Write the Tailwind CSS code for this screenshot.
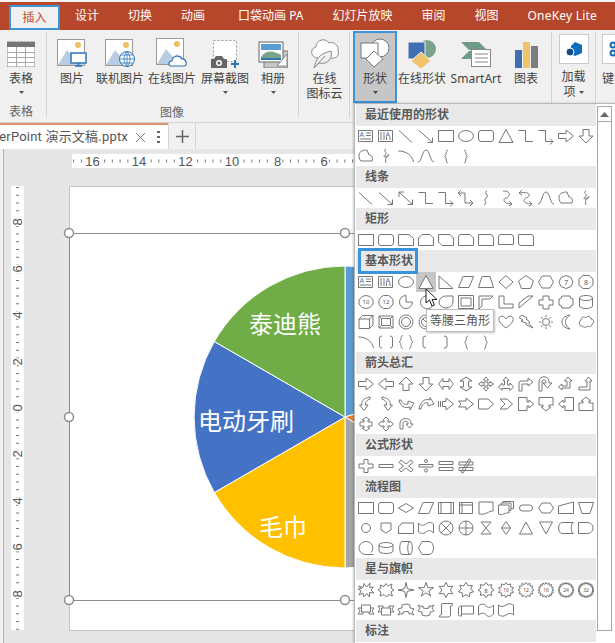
<!DOCTYPE html>
<html lang="zh">
<head>
<meta charset="utf-8">
<title>PowerPoint 插入形状</title>
<script src="https://cdn.jsdelivr.net/npm/@tailwindcss/browser@4"></script>
</head>
<body class="relative w-[615px] h-[643px] overflow-hidden flex flex-col bg-[#e6e6e6] text-xs text-[#444] font-['Noto_Sans','Noto_Sans_CJK_SC',sans-serif]">

<!-- shape library for the dropdown, every shape sits in a 20x20 cell -->
<svg class="absolute w-0 h-0">
  <defs>
    <g id="tb"><path d="M2.5 4.5H16.5V15.5H2.5Z M10 7H15 M10 9.5H15 M4 13H15"/><text x="3.5" y="11" class="text-[7px] fill-[#2e75b6] stroke-none">A</text></g>
    <g id="vt"><path d="M2.5 4.5H16.5V15.5H2.5Z M5 6V14 M8 6V14 M10.5 11V14 M14 11V14"/><text x="9.5" y="10.5" class="text-[7px] fill-[#2e75b6] stroke-none">A</text></g>
    <path id="line" d="M3 4.5L16 16.5"/>
    <path id="arrow" d="M3 4.5L16.5 16.5 M16.5 11.5V16.5H11.5"/>
    <path id="dbl" d="M3 4L16.5 16.5 M3 9V4H8 M16.5 11.5V16.5H11.5"/>
    <path id="rect" d="M2.5 4.5H17.5V15.5H2.5Z"/>
    <path id="ell" d="M2.5 10a7.5 5.5 0 1 0 15 0a7.5 5.5 0 1 0 -15 0Z"/>
    <path id="rr" d="M5 4.5H15a2.5 2.5 0 0 1 2.5 2.5V13a2.5 2.5 0 0 1-2.5 2.5H5a2.5 2.5 0 0 1-2.5-2.5V7A2.5 2.5 0 0 1 5 4.5Z"/>
    <path id="tri" d="M10 3.5L17 16.5H3Z"/>
    <path id="elb" d="M2.5 4.5H9.5V15.5H17"/>
    <path id="elba" d="M2.5 4.5H9.5V15.5H17 M14 12.5L17 15.5L14 18.5"/>
    <path id="elbd" d="M5 2L2 5L5 8 M2 5H9V15H17 M14 12L17 15L14 18"/>
    <path id="rarr" d="M2.5 7.5H10V4L17.5 10L10 16V12.5H2.5Z"/>
    <path id="larr" d="M17.5 7.5H10V4L2.5 10L10 16V12.5H17.5Z"/>
    <path id="uarr" d="M7 16.5H13V10H17L10 3L3 10H7Z"/>
    <path id="darr" d="M7 3.5H13V10H17L10 17L3 10H7Z"/>
    <path id="free" d="M3 9C3 5 8 4 11 4L13 9C16 9 17 12 16 15H5C3 13 3 11 3 9Z"/>
    <path id="scrib" d="M10 3C6 5 13 7 9 9C5 11 12 12 13 9C13 7 8 12 10 17"/>
    <path id="arc" d="M2.5 5C10 5 16 9 17.5 16"/>
    <path id="curve" d="M2 16C6 16 6 4 10 4C14 4 14 16 18 16"/>
    <path id="lbr" d="M12 4C9.5 4 11 9.5 8.5 10.5C11 11.5 9.5 17 12 17"/>
    <path id="rbr" d="M8 4C10.5 4 9 9.5 11.5 10.5C9 11.5 10.5 17 8 17"/>
    <path id="cc" d="M11 3C7 4 14 8 10 10C6 12 13 15 8 17"/>
    <path id="cca" d="M7 3C16 3 14 9 10 10C6 11 8 16 16 16 M13 13L16 16L13 18"/>
    <path id="ccd" d="M6 2L3 5L6 7 M3 5C14 3 16 8 10 10C6 12 8 16 16 16 M13 13L16 16L13 18"/>
    <path id="snip1" d="M2.5 4.5H13L17.5 8.5V15.5H2.5Z"/>
    <path id="snip2" d="M6 4.5H14L17.5 8V15.5H2.5V8Z"/>
    <path id="snipd" d="M2.5 4.5H14L17.5 8V15.5H6L2.5 12Z"/>
    <path id="snipr" d="M5 4.5H14L17.5 8V15.5H2.5V7Q2.5 4.5 5 4.5Z"/>
    <path id="rnd1" d="M2.5 4.5H14Q17.5 4.5 17.5 8V15.5H2.5Z"/>
    <path id="rnd2" d="M5 4.5H15Q17.5 4.5 17.5 7V14.5H2.5V7Q2.5 4.5 5 4.5Z"/>
    <path id="rndd" d="M2.5 4.5H15Q17.5 4.5 17.5 7V15.5H5Q2.5 15.5 2.5 13Z"/>
    <path id="rtri" d="M3 4L17 16.5H3Z"/>
    <path id="para" d="M7 4.5H17.5L13 15.5H2.5Z"/>
    <path id="trap" d="M6 4.5H14L17.5 15.5H2.5Z"/>
    <path id="diam" d="M10 3.5L17 10L10 16.5L3 10Z"/>
    <path id="pent" d="M10 3.5L17.5 9L14.5 16.5H5.5L2.5 9Z"/>
    <path id="hex" d="M6 4H14L17.5 10L14 16H6L2.5 10Z"/>
    <g id="n7"><path d="M10 3.5L15 5.5L17 10L15 14.5L10 16.5L5 14.5L3 10L5 5.5Z"/><text x="10" y="12.5" text-anchor="middle" class="text-[7px] fill-[#555] stroke-none">7</text></g>
    <g id="n8"><path d="M7 3.5H13L17 7V13L13 16.5H7L3 13V7Z"/><text x="10" y="12.5" text-anchor="middle" class="text-[7px] fill-[#555] stroke-none">8</text></g>
    <g id="n10"><path d="M10 3.5L14 4.5L17 8V12L14 15.5L10 16.5L6 15.5L3 12V8L6 4.5Z"/><text x="10" y="12" text-anchor="middle" class="text-[6px] fill-[#555] stroke-none">10</text></g>
    <g id="n12"><path d="M7.5 3.5H12.5L15 5L17 8V12L15 15L12.5 16.5H7.5L5 15L3 12V8L5 5Z"/><text x="10" y="12" text-anchor="middle" class="text-[6px] fill-[#555] stroke-none">12</text></g>
    <path id="pie" d="M10 3.5a6.5 6.5 0 1 0 6.5 6.5H10Z"/>
    <path id="chord" d="M14 4.5a6.5 6.5 0 1 0 2 10Z"/>
    <path id="tear" d="M3 10a7 6 0 0 1 7-6H17V10a7 6 0 0 1-14 0Z"/>
    <path id="frame" d="M2.5 3.5H17.5V16.5H2.5Z M5 6H15V14H5Z"/>
    <path id="half" d="M3 4H17L14 7H6V14L3 17Z"/>
    <path id="ell2" d="M3 4H8V12H17V16H3Z"/>
    <path id="diag" d="M3 16V11L12 4H17Z"/>
    <path id="cross" d="M7 4H13V8H17V13H13V17H7V13H3V8H7Z"/>
    <path id="plaq" d="M6 4H14Q14 7 17 7V13Q14 13 14 16H6Q6 13 3 13V7Q6 7 6 4Z"/>
    <path id="can" d="M3.5 6a6.5 2.5 0 0 1 13 0V14a6.5 2.5 0 0 1-13 0Z M3.5 6a6.5 2.5 0 0 0 13 0"/>
    <path id="cube" d="M3 7L6.5 3.5H17V13L13.5 16.5H3Z M3 7H13.5V16.5 M13.5 7L17 3.5"/>
    <path id="bevel" d="M3 4H17V16H3Z M5.5 6.5H14.5V13.5H5.5Z M3 4L5.5 6.5 M17 4L14.5 6.5 M17 16L14.5 13.5 M3 16L5.5 13.5"/>
    <path id="donut" d="M3 10a7 7 0 1 0 14 0a7 7 0 1 0-14 0Z M5.5 10a4.5 4.5 0 1 0 9 0a4.5 4.5 0 1 0-9 0Z"/>
    <path id="nosym" d="M3 10a7 7 0 1 0 14 0a7 7 0 1 0-14 0Z M5.5 10a4.5 4.5 0 1 0 9 0a4.5 4.5 0 1 0-9 0Z M6.5 6.5L13.5 13.5"/>
    <path id="heart" d="M10 16C3 11 2.5 8 3 6C4 3.5 8 3.5 10 7C12 3.5 16 3.5 17 6C17.5 8 17 11 10 16Z"/>
    <path id="bolt" d="M6 3L11 6L10 7L14 10L12.5 11L17 16L10 12.5L11 11.5L5 9L7 8L3 5.5Z"/>
    <path id="sun" d="M6.5 10a3.5 3.5 0 1 0 7 0a3.5 3.5 0 1 0-7 0Z M10 3V5 M10 15V17 M3 10H5 M15 10H17 M5 5L6.5 6.5 M15 5L13.5 6.5 M5 15L6.5 13.5 M15 15L13.5 13.5"/>
    <path id="moon" d="M14 3C8 4 6 7 6 10C6 13 8 16 14 17C10 14 9.5 12 9.5 10C9.5 8 10 6 14 3Z"/>
    <path id="cloud" d="M5 8C5 5 8 4 10 6C11 3.5 15 4 15 7C18 7 18.5 11 16 12C16 15 13 15 12 14C10 16 7 15.5 6.5 14C3 14.5 2 10 5 8Z"/>
    <path id="brkp" d="M6 4Q3.5 4 3.5 6V14Q3.5 16 6 16 M14 4Q16.5 4 16.5 6V14Q16.5 16 14 16"/>
    <path id="brcp" d="M7 3.5C4 3.5 6 9 3 10C6 11 4 16.5 7 16.5 M13 3.5C16 3.5 14 9 17 10C14 11 16 16.5 13 16.5"/>
    <path id="lbk" d="M10 4Q7 4 7 6V14Q7 16 10 16"/>
    <path id="rbk" d="M8 4Q11 4 11 6V14Q11 16 8 16"/>
    <path id="lr" d="M2.5 10L7 4.5V7.5H13V4.5L17.5 10L13 15.5V12.5H7V15.5Z"/>
    <path id="ud" d="M10 3L16 7H12.5V13H16L10 17L4 13H7.5V7H4Z"/>
    <path id="quad" d="M10 3L12.5 6H11V9H14V7.5L17.5 10L14 12.5V11H11V14H12.5L10 17L7.5 14H9V11H6V12.5L2.5 10L6 7.5V9H9V6H7.5Z"/>
    <path id="lru" d="M10 3L13 6.5H11.5V11H14V9L17.5 13L14 16.5V14.5H6V16.5L2.5 13L6 9V11H8.5V6.5H7Z"/>
    <path id="bent" d="M3 17V9Q3 7 5 7H12V4L17 8L12 12V10H6V17Z"/>
    <path id="uturn" d="M3 17V8C3 1 13 1 13 8V9H16L11.5 14L7 9H10V8C10 5 6 5 6 8V17Z"/>
    <path id="lup" d="M12 3L16 7H14V14H6V16L2.5 13L6 10V12H11V7H8.5Z"/>
    <path id="bup" d="M3 13H11V7H9L12.5 3L16 7H14V16H3Z"/>
    <path id="cl" d="M14 3C7 4 5 8 6 11H3.5L8 16.5L12 11H9.5C9 8 11 6 14 5Z"/>
    <path id="cr" d="M6 3C13 4 15 8 14 11H16.5L12 16.5L8 11H10.5C11 8 9 6 6 5Z"/>
    <path id="cu" d="M3 6C4 12 9 15 14 13V16L18 9L12 7V10C9 11 6 10 5 6Z"/>
    <path id="cd" d="M3 15C4 8 9 4 14 6V3.5L18 10L12 12V9C9 8 6 10 5 15Z"/>
    <path id="str" d="M2.5 7V13 M4.5 7V13 M6.5 7.5H10V4L17.5 10L10 16V12.5H6.5Z"/>
    <path id="notch" d="M2.5 7H10V4L17.5 10L10 16V13H2.5L5 10Z"/>
    <path id="home" d="M2.5 5H12L17.5 10L12 15H2.5Z"/>
    <path id="chev" d="M4 5H11L16.5 10L11 15H4L9 10Z"/>
    <path id="calr" d="M2.5 3.5H11V8H13V6L17.5 10L13 14V12H11V16.5H2.5Z"/>
    <path id="cald" d="M3 3.5H17V11H13V13H15L10 17L5 13H7V11H3Z"/>
    <path id="call" d="M17.5 3.5H9V8H7V6L2.5 10L7 14V12H9V16.5H17.5Z"/>
    <path id="calu" d="M3 16.5H17V9H13V7H15L10 3L5 7H7V9H3Z"/>
    <path id="calv" d="M10 3L14 6H12V8H16V12H12V14H14L10 17L6 14H8V12H4V8H8V6H6Z"/>
    <path id="calq" d="M10 3L13 6H12V8H14V7L17.5 10L14 13V12H12V14H13L10 17L7 14H8V12H6V13L2.5 10L6 7V8H8V6H7Z"/>
    <path id="circ" d="M4 15V9C4 3 15 3 15 9V10H17L13.5 14L10 10H12V9C12 6.5 7 6.5 7 9V15Z"/>
    <path id="plus" d="M8 3.5H12V8H17V12H12V16.5H8V12H3V8H8Z"/>
    <path id="minus" d="M3 8.5H17V11.5H3Z"/>
    <path id="mult" d="M5 4L10 8L15 4L17 6.5L12.5 10L17 13.5L15 16L10 12L5 16L3 13.5L7.5 10L3 6.5Z"/>
    <path id="divd" d="M3 8.5H17V11H3Z M8.5 5a1.5 1.5 0 1 0 3 0a1.5 1.5 0 1 0-3 0Z M8.5 14.5a1.5 1.5 0 1 0 3 0a1.5 1.5 0 1 0-3 0Z"/>
    <path id="eq" d="M3 5.5H17V8.5H3Z M3 11.5H17V14.5H3Z"/>
    <path id="neq" d="M3 6H17V9H3Z M3 11.5H17V14.5H3Z M13 3L15 4L7 17L5 16Z"/>
    <path id="dec" d="M2.5 10L10 5.5L17.5 10L10 14.5Z"/>
    <path id="pred" d="M2.5 4.5H17.5V15.5H2.5Z M5 4.5V15.5 M15 4.5V15.5"/>
    <path id="intn" d="M3.5 4.5H16.5V15.5H3.5Z M6 4.5V15.5 M3.5 7H16.5"/>
    <path id="doc" d="M3 4H17V13C12 13 11 17 3 16Z"/>
    <path id="multi" d="M2.5 7H13V15C9 14 7 18 2.5 16Z M5 7V5H15V12.5H13 M7 5V3.5H17.5V10.5H15"/>
    <path id="term" d="M6.5 7H13.5a3 3 0 0 1 0 6H6.5a3 3 0 0 1 0-6Z"/>
    <path id="prep" d="M6 5H14L17.5 10L14 15H6L2.5 10Z"/>
    <path id="mani" d="M2.5 8L17.5 4V15.5H2.5Z"/>
    <path id="mano" d="M2.5 4.5H17.5L14 15.5H6Z"/>
    <path id="conn" d="M5.5 10a4.5 4.5 0 1 0 9 0a4.5 4.5 0 1 0-9 0Z"/>
    <path id="off" d="M5 5H15V12L10 15L5 12Z"/>
    <path id="card" d="M6 5H17.5V15.5H2.5V9Z"/>
    <path id="tape" d="M2.5 5C5 8 8 8 10 6C12 4 15 4 17.5 6V15C15 12 12 12 10 14C8 16 5 16 2.5 14Z"/>
    <path id="sumj" d="M3 10a7 7 0 1 0 14 0a7 7 0 1 0-14 0Z M5 5L15 15 M15 5L5 15"/>
    <path id="orj" d="M3 10a7 7 0 1 0 14 0a7 7 0 1 0-14 0Z M10 3V17 M3 10H17"/>
    <path id="coll" d="M5 4H15L5 16H15Z"/>
    <path id="sort" d="M10 3.5L14.5 10L10 16.5L5.5 10Z M5.5 10H14.5"/>
    <path id="ext" d="M10 4L16.5 16H3.5Z"/>
    <path id="merg" d="M3.5 4H16.5L10 16Z"/>
    <path id="stor" d="M6 4.5H17.5C14.5 4.5 14.5 15.5 17.5 15.5H6C1.5 15.5 1.5 4.5 6 4.5Z"/>
    <path id="delay" d="M2.5 4.5H11C19 4.5 19 15.5 11 15.5H2.5Z"/>
    <path id="seq" d="M17.5 16.5H10a7 6.5 0 1 1 5-2"/>
    <path id="disk" d="M3 7a7 2.5 0 0 1 14 0V13a7 2.5 0 0 1-14 0Z M3 7a7 2.5 0 0 0 14 0"/>
    <path id="drum" d="M6 3.5H14C17 3.5 17 16.5 14 16.5H6C3 16.5 3 3.5 6 3.5Z M14 3.5C11 3.5 11 16.5 14 16.5"/>
    <path id="disp" d="M6 3.5H13C19 3.5 19 16.5 13 16.5H6L2.5 10Z"/>
    <path id="exp1" d="M2.5 6L7 7.5L8 3.5L10.5 7L14 3L13.5 7.5L17.5 7L15 10L18 13L13.5 12.5L13.5 17L10.5 13.5L8 17L7 13L3 15L5 11L2 9L5.5 8.5Z"/>
    <path id="exp2" d="M4 5L8 6.5L10 3.5L12 6L16 4L15 8L18 10L15 12L16.5 16L12.5 14.5L10.5 17L8 14.5L4 16L5 12L2 10L5 8Z"/>
    <path id="s4" data-star="4" data-r="2"/>
    <path id="s5" data-star="5" data-r="3"/>
    <path id="s6" data-star="6" data-r="4.2"/>
    <path id="s7" data-star="7" data-r="4.8"/>
    <g id="s8"><path data-star="8" data-r="5.4"/><text x="10" y="12.5" text-anchor="middle" class="text-[6px] fill-[#555] stroke-none">8</text></g>
    <g id="s10"><path data-star="10" data-r="5.6"/><text x="10" y="12" text-anchor="middle" class="text-[5px] fill-[#555] stroke-none">10</text></g>
    <g id="s12"><path data-star="12" data-r="6"/><text x="10" y="12" text-anchor="middle" class="text-[5px] fill-[#555] stroke-none">12</text></g>
    <g id="s16"><path data-star="16" data-r="6"/><text x="10" y="12" text-anchor="middle" class="text-[5px] fill-[#555] stroke-none">16</text></g>
    <g id="s24"><path data-star="24" data-r="6.2"/><text x="10" y="12" text-anchor="middle" class="text-[5px] fill-[#555] stroke-none">24</text></g>
    <g id="s32"><path data-star="32" data-r="6.2"/><text x="10" y="12" text-anchor="middle" class="text-[5px] fill-[#555] stroke-none">32</text></g>
    <path id="rup" d="M2 8H5.5V5H14.5V8H18L16 11L18 14H13V12H7V14H2L4 11Z M5.5 8V12H7 M14.5 8V12H13"/>
    <path id="rdn" d="M2 6H7V8H13V6H18L16 9L18 12H14.5V15H5.5V12H2L4 9Z M5.5 12V8H7 M14.5 12V8H13"/>
    <path id="rcu" d="M2 9Q4 8 6 8V5Q10 3 14 5V8Q16 8 18 9L16 12L18 15Q15 13 13 14V12Q10 11 7 12V14Q5 13 2 15L4 12Z"/>
    <path id="rcd" d="M2 5Q5 7 7 6V8Q10 9 13 8V6Q15 7 18 5L16 8L18 11Q16 12 14 12V15Q10 17 6 15V12Q4 12 2 11L4 8Z"/>
    <path id="vsc" d="M6 3.5H16.5Q17 6 14.5 6V15Q14 17 12 17H3.5Q3 15 5.5 14.5V6Q5 4 6 3.5Z"/>
    <path id="hsc" d="M5.5 6H17.5V14H5.5V16Q3 16.5 2.5 15V8Q3 6 5.5 6Z M5.5 6V14"/>
    <path id="wave" d="M2.5 6C6 3 9 4 10 6C12 8 15 8 17.5 5V14C15 17 12 17 10 15C9 13 6 12 2.5 15Z"/>
    <path id="dwav" d="M2.5 5C5 7 7 7 10 5C13 3 15 4 17.5 5V15C15 13 13 13 10 15C7 17 5 16 2.5 15Z"/>
  </defs>
</svg>

<!-- title bar -->
<div class="h-[2px] bg-[#f4f4f4]"></div>
<div class="h-[28px] bg-[#b7472a] flex items-center gap-[29px] pl-[9px] text-white">
  <div class="w-[51px] h-[25px] -mr-[14px] self-end flex items-center justify-center bg-[#f0f0f0] border-2 border-[#3b93d9] text-[#c0502e]">插入</div>
  <span>设计</span>
  <span>切换</span>
  <span>动画</span>
  <span class="ml-[4px]">口袋动画 PA</span>
  <span>幻灯片放映</span>
  <span>审阅</span>
  <span>视图</span>
  <span class="whitespace-nowrap tracking-[0.2px]">OneKey Lite</span>
</div>

<!-- ribbon -->
<div class="h-[93px] bg-[#f0f0f0] border-b border-[#d4d4d4] flex leading-[15px]">
  <div class="w-[47px] pr-[5px] flex flex-col items-center relative">
    <div class="absolute right-0 top-[2px] bottom-[5px] w-px bg-[#d4d4d4]"></div>
    <div class="h-[41px] flex items-end pb-[4px]">
      <svg width="28" height="26" viewBox="0 0 28 26"><rect width="28" height="25" y="1" fill="#fff" stroke="#8a8a8a"/><rect width="28" height="5" y="1" fill="#757575"/><path d="M0 11.5H28M0 16.5H28M0 21.5H28M9.5 6V26M18.5 6V26" stroke="#a8a8a8"/></svg>
    </div>
    <span>表格</span>
    <svg class="mt-[5px]" width="5" height="3"><path d="M0 0H5L2.5 3Z" fill="#555"/></svg>
    <span class="mt-auto mb-[3px] text-[#666]">表格</span>
  </div>
  <div class="w-[252px] relative">
    <div class="absolute right-0 top-[2px] bottom-[5px] w-px bg-[#d4d4d4]"></div>
    <div class="flex h-[72px]">
      <div class="w-[48px] ml-px flex flex-col items-center">
        <div class="h-[41px] flex items-end pb-[4px]">
          <svg width="30" height="28" viewBox="0 0 30 28"><rect x=".5" y=".5" width="27" height="26" fill="#fff" stroke="#999"/><circle cx="21" cy="6" r="3" fill="#f0bd62"/><path d="M1 26L10 11L17 19L21 16L27 26Z" fill="#b8cde4"/><rect x="14" y="14" width="15" height="10" fill="#fff" stroke="#2e75b6" stroke-width="1.5"/><path d="M18 27H25M21.5 24V27" stroke="#2e75b6" stroke-width="1.5"/></svg>
        </div>
        <span>图片</span>
      </div>
      <div class="w-[48px] flex flex-col items-center">
        <div class="h-[41px] flex items-end pb-[4px]">
          <svg width="30" height="28" viewBox="0 0 30 28"><rect x=".5" y=".5" width="27" height="26" fill="#fff" stroke="#999"/><circle cx="21" cy="6" r="3" fill="#f0bd62"/><path d="M1 26L10 11L17 19L21 16L27 26Z" fill="#b8cde4"/><circle cx="22" cy="20" r="7.5" fill="#fff" stroke="#2e75b6"/><path d="M14.5 20H29.5M22 12.5V27.5M16 16H28M16 24H28M22 12.5C18 16 18 24 22 27.5C26 24 26 16 22 12.5" fill="none" stroke="#2e75b6" stroke-width=".8"/></svg>
        </div>
        <span class="whitespace-nowrap">联机图片</span>
      </div>
      <div class="w-[48px] ml-[4px] flex flex-col items-center">
        <div class="h-[41px] flex items-end pb-[4px]">
          <svg width="32" height="29" viewBox="0 0 32 29"><rect x=".5" y=".5" width="27" height="26" fill="#fff" stroke="#999"/><circle cx="21" cy="6" r="3" fill="#f0bd62"/><path d="M1 26L10 11L17 19L21 16L27 26Z" fill="#b8cde4"/><path d="M15 28C12 28 12 23 16 23C16 18 24 16 26 21C30 20 32 28 28 28Z" fill="#fff" stroke="#2e75b6" stroke-width="1.2"/></svg>
        </div>
        <span class="whitespace-nowrap">在线图片</span>
      </div>
      <div class="w-[48px] ml-[5px] flex flex-col items-center">
        <div class="h-[41px] flex items-end pb-[2px]">
          <svg width="30" height="29" viewBox="0 0 30 29"><rect x="3.5" y=".5" width="23" height="21" fill="#fff" stroke="#999" stroke-dasharray="2 2"/><path d="M1 19H4L6 16H12L14 19H17V28H1Z" fill="#666"/><circle cx="9" cy="23" r="3" fill="#fff"/><circle cx="9" cy="23" r="1.6" fill="#666"/><path d="M25 20V28M21 24H29" stroke="#2e75b6" stroke-width="2"/></svg>
        </div>
        <span class="whitespace-nowrap">屏幕截图</span>
        <svg class="mt-[5px]" width="5" height="3"><path d="M0 0H5L2.5 3Z" fill="#555"/></svg>
      </div>
      <div class="w-[48px] flex flex-col items-center">
        <div class="h-[41px] flex items-end pb-[3px]">
          <svg width="30" height="27" viewBox="0 0 30 27"><rect x="6" y="10" width="24" height="17" fill="#c8c8c8" stroke="#777"/><rect x="1" y="1" width="24" height="20" fill="#fff" stroke="#666"/><rect x="3" y="3" width="20" height="6" fill="#5b9bd5"/><path d="M3 16C8 9 14 9 23 14V19H3Z" fill="#7aa38c"/><path d="M3 18H23" stroke="#2e75b6" stroke-width="2"/><path d="M19 25L29 13V25Z" fill="#fff" stroke="#888"/></svg>
        </div>
        <span>相册</span>
        <svg class="mt-[5px]" width="5" height="3"><path d="M0 0H5L2.5 3Z" fill="#555"/></svg>
      </div>
    </div>
    <div class="text-center pr-[2px] pt-[3px] text-[#666]">图像</div>
  </div>
  <div class="w-[51px] flex flex-col items-center relative">
    <div class="absolute right-0 top-[2px] bottom-[5px] w-px bg-[#d4d4d4]"></div>
    <div class="h-[41px] flex items-end pb-[2px]">
      <svg width="30" height="31" viewBox="0 0 30 31" fill="#fff" stroke="#8a8a8a"><path d="M8 20C1 20 -1 11 6 9C6 2 15 -1 19 5C24 3 29 8 28 13C30 19 24 21 21 20"/><path d="M4 30C6 22 8 16 21 13C23 21 17 27 9 25Z" fill="#f0f0f0"/><path d="M4 30L15 18" /></svg>
    </div>
    <span class="text-center">在线<br>图标云</span>
  </div>
  <div class="flex h-[72px] pl-[3px]">
    <div class="w-[44px] h-[72px] mt-px bg-[#c6c6c6] border-2 border-[#3b93d9] flex flex-col items-center">
      <div class="h-[38px] flex items-end pb-[3px]">
        <svg width="30" height="30" viewBox="0 0 30 30" fill="#fff" stroke="#777"><circle cx="20" cy="10" r="9"/><rect x="1" y="5" width="17" height="15"/><path d="M14 13L23 21L14 29L6 21Z"/></svg>
      </div>
      <span>形状</span>
      <svg class="mt-[5px]" width="5" height="3"><path d="M0 0H5L2.5 3Z" fill="#444"/></svg>
    </div>
    <div class="w-[48px] ml-px flex flex-col items-center">
      <div class="h-[41px] flex items-end pb-[2px]">
        <svg width="30" height="30" viewBox="0 0 30 30"><circle cx="20" cy="10" r="9" fill="#7aa38c"/><path d="M1 3H18V20H1Z" fill="#3f6fb0" stroke="#f0f0f0"/><path d="M14 13L24 22L14 30L4 22Z" fill="#efc46c" stroke="#f0f0f0"/></svg>
      </div>
      <span class="whitespace-nowrap">在线形状</span>
    </div>
    <div class="w-[50px] ml-[5px] flex flex-col items-center">
      <div class="h-[41px] flex items-end pb-[4px]">
        <svg width="30" height="25" viewBox="0 0 30 25"><path d="M0 0H18L26 8H8Z" fill="#6f9c84"/><path d="M0 17L8 9H14V17Z" fill="#6f9c84"/><rect x="10.5" y="7.5" width="19" height="17" fill="#fff" stroke="#888"/><path d="M14 12H27M14 16H27M14 20H27" stroke="#888"/></svg>
      </div>
      <span>SmartArt</span>
    </div>
    <div class="w-[48px] ml-px flex flex-col items-center">
      <div class="h-[41px] flex items-end pb-[3px]">
        <svg width="23" height="27" viewBox="0 0 23 27"><rect y="9" width="7" height="18" fill="#3f6fb0"/><rect x="8" y="1" width="7" height="26" fill="#efc46c"/><rect x="16" y="5" width="7" height="22" fill="#7d7d7d"/></svg>
      </div>
      <span>图表</span>
    </div>
  </div>
  <div class="w-[45px] ml-px border-l border-r border-[#d4d4d4] h-[87px] mt-[2px] flex flex-col items-center">
    <div class="h-[36px] pt-[2px]">
      <div class="w-[30px] h-[30px] bg-white border border-[#ccc] flex items-center justify-center">
        <svg width="16" height="15" viewBox="0 0 16 15"><path d="M9 0L16 3V11L9 14L5 12V4Z" fill="#0f6cbd"/><circle cx="4" cy="10" r="4" fill="#0f4f8f" stroke="#fff"/></svg>
      </div>
    </div>
    <span class="mt-[1px] text-center">加载<br>项<svg class="inline ml-[3px]" width="5" height="3"><path d="M0 0H5L2.5 3Z" fill="#555"/></svg></span>
  </div>
  <div class="flex-1 overflow-hidden pl-[6px] flex flex-col">
    <div class="h-[41px] pt-[4px]">
      <div class="w-[30px] h-[30px] bg-white border border-[#ccc] flex items-center pl-[5px]">
        <svg class="shrink-0" width="18" height="16" viewBox="0 0 18 16" fill="none" stroke="#0f6cbd" stroke-width="2"><circle cx="5" cy="4" r="2.5"/><circle cx="5" cy="12" r="2.5"/></svg>
      </div>
    </div>
    <span>键</span>
  </div>
</div>

<!-- document tab strip -->
<div class="h-[26px] bg-[#f0f0f0] flex">
  <div class="w-[168px] bg-white border-t-2 border-[#e0916f] flex items-center justify-end text-[#555] text-[13px] overflow-hidden pr-[4px] gap-[5px] whitespace-nowrap font-['Roboto','Noto_Sans_CJK_SC',sans-serif]">
    <span class="tracking-[0.2px]">PowerPoint 演示文稿.pptx</span>
    <svg class="shrink-0 ml-[2px]" width="11" height="11" stroke="#777"><path d="M1 1L10 10M10 1L1 10"/></svg>
    <svg class="shrink-0 ml-[6px] mr-[4px]" width="3" height="12" fill="#666"><path d="M0 0h3v2h-3zM0 5h3v2h-3zM0 10h3v2h-3z"/></svg>
  </div>
  <div class="w-[28px] border-l border-r border-[#d4d4d4] flex items-center justify-center">
    <svg width="13" height="13" stroke="#666" stroke-width="1.5"><path d="M6.5 0V13M0 6.5H13"/></svg>
  </div>
</div>

<!-- editing canvas, coordinates are page pixels -->
<svg class="flex-1 block w-[615px]" viewBox="0 149 615 494">
  <path d="M3.5 149V643" stroke="#b4b4b4"/>
  <rect x="0" y="149" width="3" height="494" fill="#f0f0f0"/>

  <rect x="72" y="154" width="283" height="14" fill="#fff"/>
  <path d="M73.1 161H355" stroke="#777" stroke-width="3" stroke-dasharray="1 6.75"/>
  <g class="text-[13px] fill-[#555]" text-anchor="middle" font-family="Liberation Sans" stroke="#fff" stroke-width="3" paint-order="stroke">
    <text x="92.5" y="165.5">16</text>
    <text x="139" y="165.5">14</text>
    <text x="185.5" y="165.5">12</text>
    <text x="232" y="165.5">10</text>
    <text x="277.5" y="165.5">8</text>
    <text x="324" y="165.5">6</text>
  </g>

  <rect x="11" y="186" width="13" height="444" fill="#fff"/>
  <path d="M17.5 187.1V630" stroke="#777" stroke-width="3" stroke-dasharray="1 6.75"/>
  <g class="text-[13px] fill-[#555]" text-anchor="middle" font-family="Liberation Sans" stroke="#fff" stroke-width="3" paint-order="stroke">
    <text transform="translate(22 222) rotate(-90)">8</text>
    <text transform="translate(22 269) rotate(-90)">6</text>
    <text transform="translate(22 315) rotate(-90)">4</text>
    <text transform="translate(22 362) rotate(-90)">2</text>
    <text transform="translate(22 408) rotate(-90)">0</text>
    <text transform="translate(22 454) rotate(-90)">2</text>
    <text transform="translate(22 501) rotate(-90)">4</text>
    <text transform="translate(22 547) rotate(-90)">6</text>
    <text transform="translate(22 594) rotate(-90)">8</text>
  </g>

  <rect x="69.5" y="186.5" width="300" height="444" fill="#fff" stroke="#c4c4c4"/>

  <g stroke="#fff">
    <path d="M345 417V266A151 151 0 0 1 489.6 373.6Z" fill="#5b9bd5"/>
    <path d="M345 417L489.6 373.6A151 151 0 0 1 474.5 494.7Z" fill="#ed7d31"/>
    <path d="M345 417L474.5 494.7A151 151 0 0 1 345 568Z" fill="#a5a5a5"/>
    <path d="M345 417V568A151 151 0 0 1 214.3 492.5Z" fill="#ffc000"/>
    <path d="M345 417L214.3 492.5A151 151 0 0 1 214.3 341.5Z" fill="#4472c4"/>
    <path d="M345 417L214.3 341.5A151 151 0 0 1 345 266Z" fill="#70ad47"/>
  </g>
  <g class="text-[24px] fill-white" text-anchor="middle" font-family="Noto Sans CJK SC">
    <text x="285" y="333">泰迪熊</text>
    <text x="246" y="430">电动牙刷</text>
    <text x="283" y="536">毛巾</text>
  </g>

  <path d="M69.5 233.5H355 M69.5 600.5H355 M69.5 233.5V600.5" fill="none" stroke="#8c8c8c"/>
  <g fill="#fff" stroke="#8c8c8c" stroke-width="1.5">
    <circle cx="69" cy="233" r="4.5"/>
    <circle cx="345" cy="233" r="4.5"/>
    <circle cx="69" cy="417" r="4.5"/>
    <circle cx="69" cy="600" r="4.5"/>
    <circle cx="345" cy="600" r="4.5"/>
  </g>
</svg>

<!-- shapes dropdown -->
<div class="absolute left-[354px] top-[103px] bottom-0 right-0 bg-white border-l border-t border-[#b8b8b8] shadow-[-1px_0_2px_rgba(0,0,0,0.2)] flex">
  <div class="w-[241px] pl-px">
    <div class="h-[22px] bg-[#e9e9e9] pl-[9px] leading-[22px] font-bold text-[#5a5a5a]">最近使用的形状</div>
    <svg class="block w-[240px] h-[20px] fill-none stroke-[#777]"><use href="#tb"/><use href="#vt" x="20"/><use href="#line" x="40"/><use href="#arrow" x="60"/><use href="#rect" x="80"/><use href="#ell" x="100"/><use href="#rr" x="120"/><use href="#tri" x="140"/><use href="#elb" x="160"/><use href="#elba" x="180"/><use href="#rarr" x="200"/><use href="#darr" x="220"/></svg>
    <svg class="block w-[240px] h-[20px] fill-none stroke-[#777]"><use href="#free"/><use href="#scrib" x="20"/><use href="#arc" x="40"/><use href="#curve" x="60"/><use href="#lbr" x="80"/><use href="#rbr" x="100"/></svg>

    <div class="h-[22px] bg-[#e9e9e9] pl-[9px] leading-[22px] font-bold text-[#5a5a5a]">线条</div>
    <svg class="block w-[240px] h-[20px] fill-none stroke-[#777]"><use href="#line"/><use href="#arrow" x="20"/><use href="#dbl" x="40"/><use href="#elb" x="60"/><use href="#elba" x="80"/><use href="#elbd" x="100"/><use href="#cc" x="120"/><use href="#cca" x="140"/><use href="#ccd" x="160"/><use href="#curve" x="180"/><use href="#free" x="200"/><use href="#scrib" x="220"/></svg>

    <div class="h-[22px] bg-[#e9e9e9] pl-[9px] leading-[22px] font-bold text-[#5a5a5a]">矩形</div>
    <svg class="block w-[240px] h-[20px] fill-none stroke-[#777]"><use href="#rect"/><use href="#rr" x="20"/><use href="#snip1" x="40"/><use href="#snip2" x="60"/><use href="#snipd" x="80"/><use href="#snipr" x="100"/><use href="#rnd1" x="120"/><use href="#rnd2" x="140"/><use href="#rndd" x="160"/></svg>

    <div class="relative h-[22px] bg-[#e9e9e9] pl-[9px] leading-[22px] font-bold text-[#5a5a5a]">基本形状
      <div class="absolute left-[2px] -top-[2px] w-[60px] h-[26px] border-[3px] border-[#3b93d9]"></div>
    </div>
    <svg class="block w-[240px] h-[20px] fill-none stroke-[#777]"><rect x="60" width="20" height="20" class="fill-[#c6c6c6] stroke-none"/><use href="#tb"/><use href="#vt" x="20"/><use href="#ell" x="40"/><use href="#tri" x="60" class="fill-white"/><use href="#rtri" x="80"/><use href="#para" x="100"/><use href="#trap" x="120"/><use href="#diam" x="140"/><use href="#pent" x="160"/><use href="#hex" x="180"/><use href="#n7" x="200"/><use href="#n8" x="220"/></svg>
    <svg class="block w-[240px] h-[20px] fill-none stroke-[#777]"><use href="#n10"/><use href="#n12" x="20"/><use href="#pie" x="40"/><use href="#chord" x="60"/><use href="#tear" x="80"/><use href="#frame" x="100"/><use href="#half" x="120"/><use href="#ell2" x="140"/><use href="#diag" x="160"/><use href="#cross" x="180"/><use href="#plaq" x="200"/><use href="#can" x="220"/></svg>
    <svg class="block w-[240px] h-[20px] fill-none stroke-[#777]"><use href="#cube"/><use href="#bevel" x="20"/><use href="#donut" x="40"/><use href="#nosym" x="60"/><use href="#heart" x="140"/><use href="#bolt" x="160"/><use href="#sun" x="180"/><use href="#moon" x="200"/><use href="#cloud" x="220"/></svg>
    <svg class="block w-[240px] h-[20px] fill-none stroke-[#777]"><use href="#arc"/><use href="#brkp" x="20"/><use href="#brcp" x="40"/><use href="#lbk" x="60"/><use href="#rbk" x="80"/><use href="#lbr" x="100"/><use href="#rbr" x="120"/></svg>

    <div class="h-[22px] bg-[#e9e9e9] pl-[9px] leading-[22px] font-bold text-[#5a5a5a]">箭头总汇</div>
    <svg class="block w-[240px] h-[20px] fill-none stroke-[#777]"><use href="#rarr"/><use href="#larr" x="20"/><use href="#uarr" x="40"/><use href="#darr" x="60"/><use href="#lr" x="80"/><use href="#ud" x="100"/><use href="#quad" x="120"/><use href="#lru" x="140"/><use href="#bent" x="160"/><use href="#uturn" x="180"/><use href="#lup" x="200"/><use href="#bup" x="220"/></svg>
    <svg class="block w-[240px] h-[20px] fill-none stroke-[#777]"><use href="#cl"/><use href="#cr" x="20"/><use href="#cu" x="40"/><use href="#cd" x="60"/><use href="#str" x="80"/><use href="#notch" x="100"/><use href="#home" x="120"/><use href="#chev" x="140"/><use href="#calr" x="160"/><use href="#cald" x="180"/><use href="#call" x="200"/><use href="#calu" x="220"/></svg>
    <svg class="block w-[240px] h-[20px] fill-none stroke-[#777]"><use href="#calv"/><use href="#calq" x="20"/><use href="#circ" x="40"/></svg>

    <div class="h-[22px] bg-[#e9e9e9] pl-[9px] leading-[22px] font-bold text-[#5a5a5a]">公式形状</div>
    <svg class="block w-[240px] h-[20px] fill-none stroke-[#777]"><use href="#plus"/><use href="#minus" x="20"/><use href="#mult" x="40"/><use href="#divd" x="60"/><use href="#eq" x="80"/><use href="#neq" x="100"/></svg>

    <div class="h-[22px] bg-[#e9e9e9] pl-[9px] leading-[22px] font-bold text-[#5a5a5a]">流程图</div>
    <svg class="block w-[240px] h-[20px] fill-none stroke-[#777]"><use href="#rect"/><use href="#rr" x="20"/><use href="#dec" x="40"/><use href="#para" x="60"/><use href="#pred" x="80"/><use href="#intn" x="100"/><use href="#doc" x="120"/><use href="#multi" x="140"/><use href="#term" x="160"/><use href="#prep" x="180"/><use href="#mani" x="200"/><use href="#mano" x="220"/></svg>
    <svg class="block w-[240px] h-[20px] fill-none stroke-[#777]"><use href="#conn"/><use href="#off" x="20"/><use href="#card" x="40"/><use href="#tape" x="60"/><use href="#sumj" x="80"/><use href="#orj" x="100"/><use href="#coll" x="120"/><use href="#sort" x="140"/><use href="#ext" x="160"/><use href="#merg" x="180"/><use href="#stor" x="200"/><use href="#delay" x="220"/></svg>
    <svg class="block w-[240px] h-[20px] fill-none stroke-[#777]"><use href="#seq"/><use href="#disk" x="20"/><use href="#drum" x="40"/><use href="#disp" x="60"/></svg>

    <div class="h-[22px] bg-[#e9e9e9] pl-[9px] leading-[22px] font-bold text-[#5a5a5a]">星与旗帜</div>
    <svg class="block w-[240px] h-[20px] fill-none stroke-[#777]"><use href="#exp1"/><use href="#exp2" x="20"/><use href="#s4" x="40"/><use href="#s5" x="60"/><use href="#s6" x="80"/><use href="#s7" x="100"/><use href="#s8" x="120"/><use href="#s10" x="140"/><use href="#s12" x="160"/><use href="#s16" x="180"/><use href="#s24" x="200"/><use href="#s32" x="220"/></svg>
    <svg class="block w-[240px] h-[20px] fill-none stroke-[#777]"><use href="#rup"/><use href="#rdn" x="20"/><use href="#rcu" x="40"/><use href="#rcd" x="60"/><use href="#vsc" x="80"/><use href="#hsc" x="100"/><use href="#wave" x="120"/><use href="#dwav" x="140"/></svg>

    <div class="h-[22px] bg-[#e9e9e9] pl-[9px] leading-[22px] font-bold text-[#5a5a5a]">标注</div>
  </div>
  <div class="w-[15px] ml-px h-[525px] mt-[2px] bg-white border border-[#a8a8a8] flex flex-col">
    <div class="h-[15px] border-b border-[#a8a8a8] flex items-center justify-center">
      <svg width="9" height="5"><path d="M0 5L4.5 0L9 5Z" fill="#666"/></svg>
    </div>
  </div>
</div>

<!-- tooltip and mouse pointer over the hovered triangle -->
<div class="absolute left-[426px] top-[309px] w-[68px] h-[23px] bg-white border border-[#bdbdbd] shadow-[1px_1px_2px_rgba(0,0,0,0.25)] flex items-center justify-center text-[#555] whitespace-nowrap">等腰三角形</div>
<svg class="absolute left-[424px] top-[288px]" width="16" height="20" viewBox="0 0 16 20"><path d="M2 1V15L5.5 12L8 18L10.5 17L8 11.5H13Z" fill="#fff" stroke="#222"/></svg>

<script>
  // star outlines are computed from point count and inner radius
  document.querySelectorAll('[data-star]').forEach(function (p) {
    var n = +p.dataset.star, r = +p.dataset.r, pts = [];
    for (var i = 0; i < n * 2; i++) {
      var a = Math.PI * i / n - Math.PI / 2, d = i % 2 ? r : 8;
      pts.push((10 + d * Math.cos(a)).toFixed(1) + ' ' + (10 + d * Math.sin(a) * 0.95).toFixed(1));
    }
    p.setAttribute('d', 'M' + pts.join('L') + 'Z');
  });
</script>
</body>
</html>
